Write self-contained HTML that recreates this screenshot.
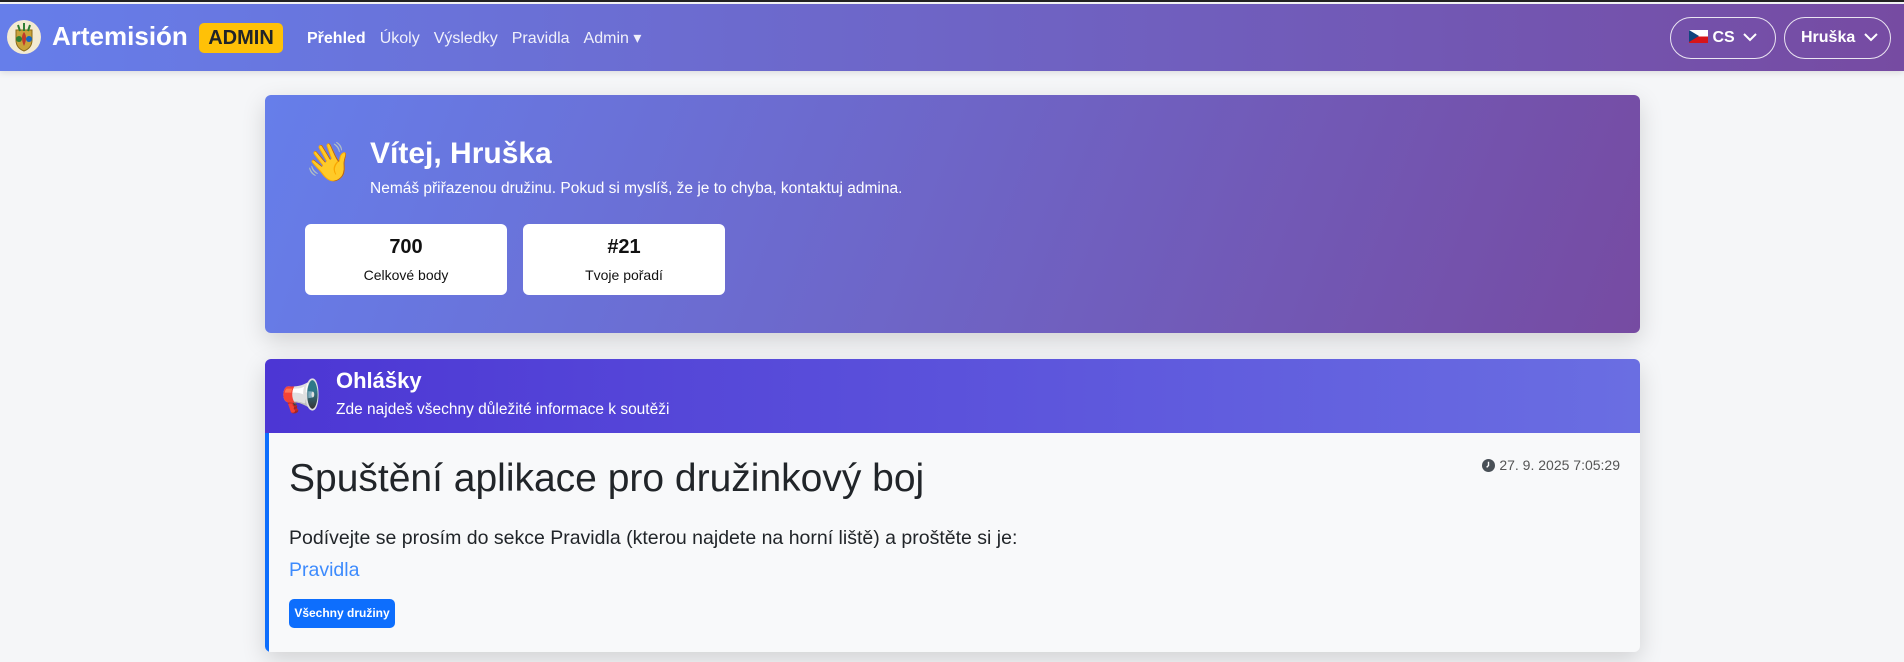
<!DOCTYPE html>
<html><head><meta charset="utf-8"><style>
*{box-sizing:border-box;margin:0;padding:0}
body{width:1904px;height:662px;overflow:hidden;background:#f5f6f8;font-family:"Liberation Sans",sans-serif;position:relative;border-top:2px solid #222}
.nav{position:absolute;left:0;top:2px;width:1904px;height:67px;background:linear-gradient(90deg,#667eea,#764ba2);box-shadow:0 2px 6px rgba(0,0,0,.1)}
.logo{position:absolute;left:7px;top:16px;width:34px;height:34px;border-radius:50%;background:#f3ead2;overflow:hidden}
.brand{position:absolute;left:52px;top:17px;color:#fff;font-weight:bold;font-size:26px}
.badge{position:absolute;left:199px;top:19px;width:84px;height:30px;background:#ffc107;border-radius:5px;color:#212529;font-weight:bold;font-size:20px;text-align:center;line-height:30px}
.links{position:absolute;left:307px;top:24px;color:#fff;font-size:16px}
.links span{margin-right:14px;opacity:.9}
.btn{position:absolute;top:13px;height:42px;border:1.5px solid rgba(255,255,255,.85);border-radius:21px;color:#fff;font-weight:bold;font-size:16px;line-height:39px;padding-left:18px}
.card1{position:absolute;left:265px;top:93px;width:1375px;height:238px;border-radius:6px;background:linear-gradient(110deg,#667eea,#764ba2);box-shadow:0 8px 24px rgba(0,0,0,.15)}
.stat{position:absolute;top:129px;width:202px;height:71px;background:#fff;border-radius:6px;text-align:center}
.stat b{display:block;font-size:20px;margin-top:12px;color:#111}
.stat i{display:block;font-style:normal;font-size:14px;margin-top:8px;color:#111}
.card2{position:absolute;left:265px;top:357px;width:1375px;height:293px;border-radius:6px;background:#f8f9fa;box-shadow:0 8px 24px rgba(0,0,0,.15);overflow:hidden}
.hd{height:74px;background:linear-gradient(90deg,#4c36d4,#6a6ee2);position:relative}
.body{position:absolute;left:0;top:74px;bottom:0;right:0;border-left:4px solid #0d6efd}
</style></head><body>
<div class="nav">
<div class="logo"><svg width="34" height="34" viewBox="0 0 34 34"><path d="M9 10h16v10q0 8-8 11q-8-3-8-11z" fill="#c9a23a" stroke="#8a6a1a"/><path d="M17 12q-4 5 0 14q4-9 0-14z" fill="#c0392b"/><circle cx="12" cy="19" r="3" fill="#2e7d32"/><circle cx="22" cy="19" r="3" fill="#1565c0"/><path d="M17 3v8M11 5l2 6M23 5l-2 6" stroke="#2e7d32" stroke-width="2"/></svg></div>
<div class="brand">Artemisión</div>
<div class="badge">ADMIN</div>
<div class="links"><span style="font-weight:bold;opacity:1">Přehled</span><span>Úkoly</span><span>Výsledky</span><span>Pravidla</span><span>Admin ▾</span></div>
<div class="btn" style="left:1670px;width:106px"><span style="display:inline-block;width:19px;height:13px;vertical-align:-1px;background:linear-gradient(#fff 50%,#d7141a 50%);position:relative;overflow:hidden"><span style="position:absolute;left:0;top:0;border-left:10px solid #11457e;border-top:6.5px solid transparent;border-bottom:6.5px solid transparent"></span></span> CS <svg width="14" height="9" viewBox="0 0 14 9" style="margin-left:4px"><path d="M1 1l6 6 6-6" stroke="#fff" stroke-width="2" fill="none"/></svg></div>
<div class="btn" style="left:1784px;width:107px;padding-left:16px">Hruška <svg width="14" height="9" viewBox="0 0 14 9" style="margin-left:4px"><path d="M1 1l6 6 6-6" stroke="#fff" stroke-width="2" fill="none"/></svg></div>
</div>
<div class="card1">
<div style="position:absolute;left:40px;top:46px;font-size:38px">👋</div>
<div style="position:absolute;left:105px;top:42px;color:#fff;font-weight:bold;font-size:30px">Vítej, Hruška</div>
<div style="position:absolute;left:105px;top:85px;color:#fff;font-size:15.5px">Nemáš přiřazenou družinu. Pokud si myslíš, že je to chyba, kontaktuj admina.</div>
<div class="stat" style="left:40px"><b>700</b><i>Celkové body</i></div>
<div class="stat" style="left:258px"><b>#21</b><i>Tvoje pořadí</i></div>
</div>
<div class="card2">
<div class="hd">
<div style="position:absolute;left:16px;top:18px;font-size:32px">📢</div>
<div style="position:absolute;left:71px;top:9px;color:#fff;font-weight:bold;font-size:22px">Ohlášky</div>
<div style="position:absolute;left:71px;top:42px;color:#fff;font-size:15.5px">Zde najdeš všechny důležité informace k soutěži</div>
</div>
<div class="body">
<div style="position:absolute;left:20px;top:24px;font-size:39px;color:#212529;font-weight:300">Spuštění aplikace pro družinkový boj</div>
<div style="position:absolute;right:20px;top:24px;font-size:14px;color:#555"><svg width="13" height="13" viewBox="0 0 14 14" style="vertical-align:-2px"><circle cx="7" cy="7" r="7" fill="#495057"/><path d="M7 3v4l-2 2" stroke="#fff" stroke-width="1.5" fill="none"/></svg> 27. 9. 2025 7:05:29</div>
<div style="position:absolute;left:20px;top:94px;font-size:19.5px;color:#212529;font-weight:300">Podívejte se prosím do sekce Pravidla (kterou najdete na horní liště) a proštěte si je:</div>
<div style="position:absolute;left:20px;top:126px;font-size:19.5px;color:#3d8bfd">Pravidla</div>
<div style="position:absolute;left:20px;top:166px;width:106px;height:29px;background:#0d6efd;border-radius:5px;color:#fff;font-weight:bold;font-size:12px;text-align:center;line-height:29px">Všechny družiny</div>
</div>
</div>
</body></html>
